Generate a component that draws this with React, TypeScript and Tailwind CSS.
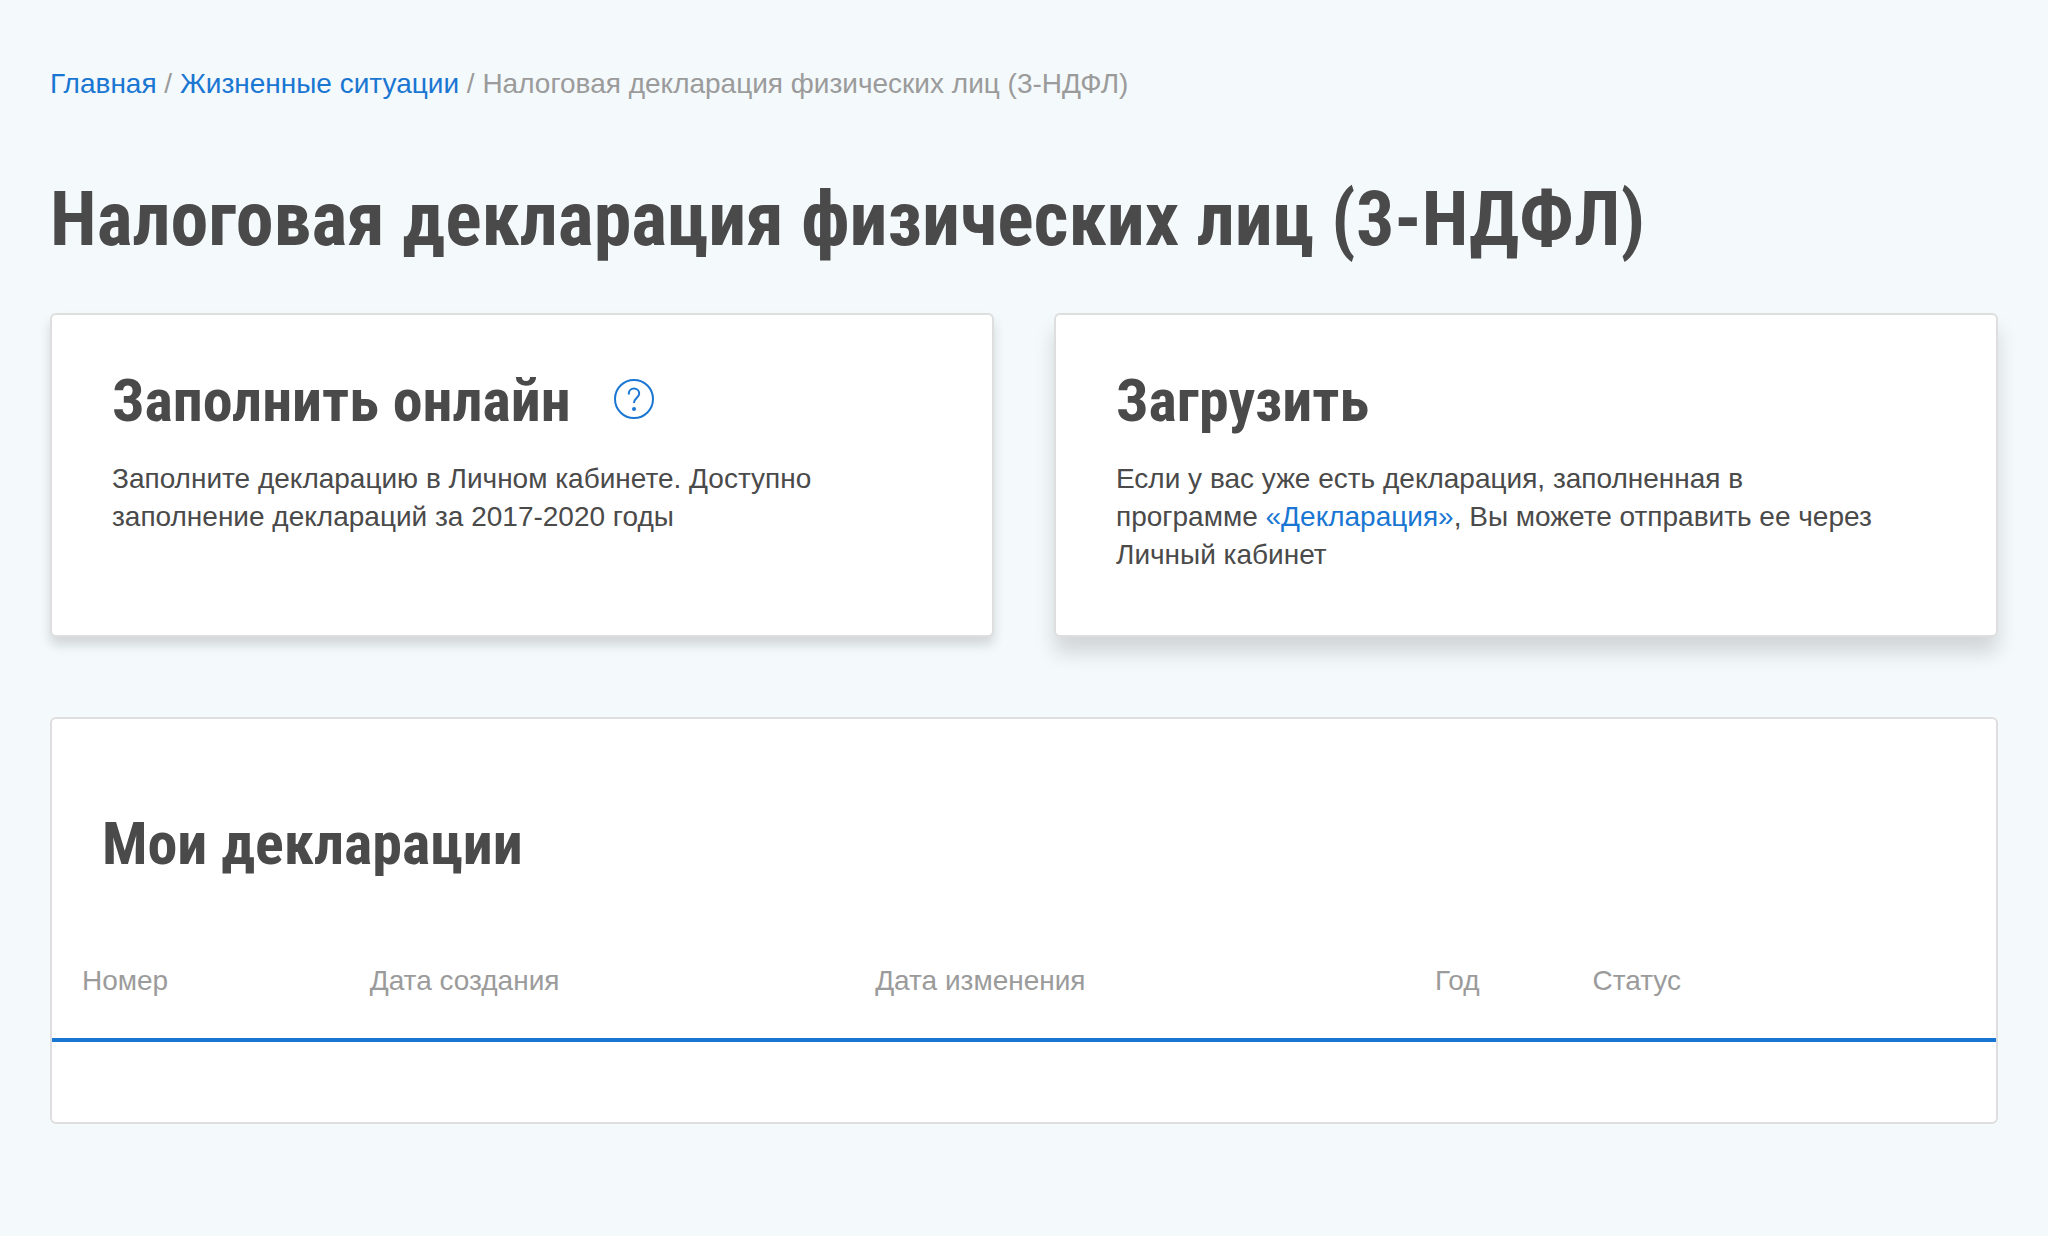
import type { ReactNode } from "react";

const HEADING = "font-['Roboto_Condensed','Liberation_Sans_Narrow',sans-serif] font-bold";

function ActionCard({ title, hint, shadow, children }: {
  title: string;
  hint?: ReactNode;
  shadow: string;
  children: ReactNode;
}) {
  return (
    <section className={`rounded-md border-2 border-[#dedede] bg-white pt-[51px] pr-[120px] pb-[61px] pl-[60px] ${shadow}`}>
      <div className="mb-6 flex items-center gap-[43px]">
        <h2 className={`${HEADING} text-[60px] leading-[70px]`}>{title}</h2>
        {hint}
      </div>
      <p>{children}</p>
    </section>
  );
}

function HelpButton() {
  return (
    <button type="button" aria-label="Подсказка" className="pb-1 text-[#1976d2]">
      <svg className="size-10" viewBox="0 0 40 40" fill="none" stroke="currentColor" strokeWidth="2">
        <circle cx="20" cy="20" r="19" />
        <path d="M14.800 15.500v-1a5.200 5 0 0 1 10.400 0c0 4.200-5.200 4.500-5.200 9.500" />
        <circle cx="20" cy="30" r="2" fill="currentColor" stroke="none" />
      </svg>
    </button>
  );
}

export default function App() {
  const columns = [
    { title: "Номер", width: "w-[14.8%]" },
    { title: "Дата создания", width: "w-[26%]" },
    { title: "Дата изменения", width: "w-[28.8%]" },
    { title: "Год", width: "w-[8.1%]" },
    { title: "Статус", width: "w-[22.3%]" },
  ];

  return (
    <main className="min-h-screen bg-[#f4f9fc] px-[50px] pt-[65px] pb-20 font-['Liberation_Sans',Arial,sans-serif] text-[28px] leading-[38px] text-[#4a4a4a]">
      {/* Breadcrumbs */}
      <nav className="text-[#9b9b9b]">
        <a href="#" className="text-[#1976d2]">Главная</a>
        {" / "}
        <a href="#" className="text-[#1976d2]">Жизненные ситуации</a>
        {" / "}
        <span>Налоговая декларация физических лиц (3-НДФЛ)</span>
      </nav>

      <h1 className={`${HEADING} mt-[66px] mb-11 text-[76px] leading-[100px]`}>
        Налоговая декларация физических лиц (3-НДФЛ)
      </h1>

      {/* Actions */}
      <div className="grid grid-cols-2 gap-[60px]">
        <ActionCard
          title="Заполнить онлайн"
          hint={<HelpButton />}
          shadow="shadow-[0_8px_12px_rgba(0,0,0,0.14)]"
        >
          Заполните декларацию в Личном кабинете. Доступно заполнение деклараций за 2017-2020 годы
        </ActionCard>
        <ActionCard title="Загрузить" shadow="shadow-[0_16px_20px_rgba(0,0,0,0.14)]">
          Если у вас уже есть декларация, заполненная в программе{" "}
          <a href="#" className="text-[#1976d2]">«Декларация»</a>, Вы можете отправить ее через Личный кабинет
        </ActionCard>
      </div>

      {/* Declarations list */}
      <section className="mt-20 rounded-md border-2 border-[#dedede] bg-white pt-[90px] pb-20">
        <h2 className={`${HEADING} px-[50px] text-[60px] leading-[70px]`}>Мои декларации</h2>
        <table className="mt-[83px] w-full table-fixed">
          <thead className="border-b-4 border-[#1976d2] text-left text-[#9b9b9b]">
            <tr>
              {columns.map((column) => (
                <th key={column.title} scope="col" className={`${column.width} pb-[38px] pl-[30px] font-normal`}>
                  {column.title}
                </th>
              ))}
            </tr>
          </thead>
        </table>
      </section>
    </main>
  );
}
